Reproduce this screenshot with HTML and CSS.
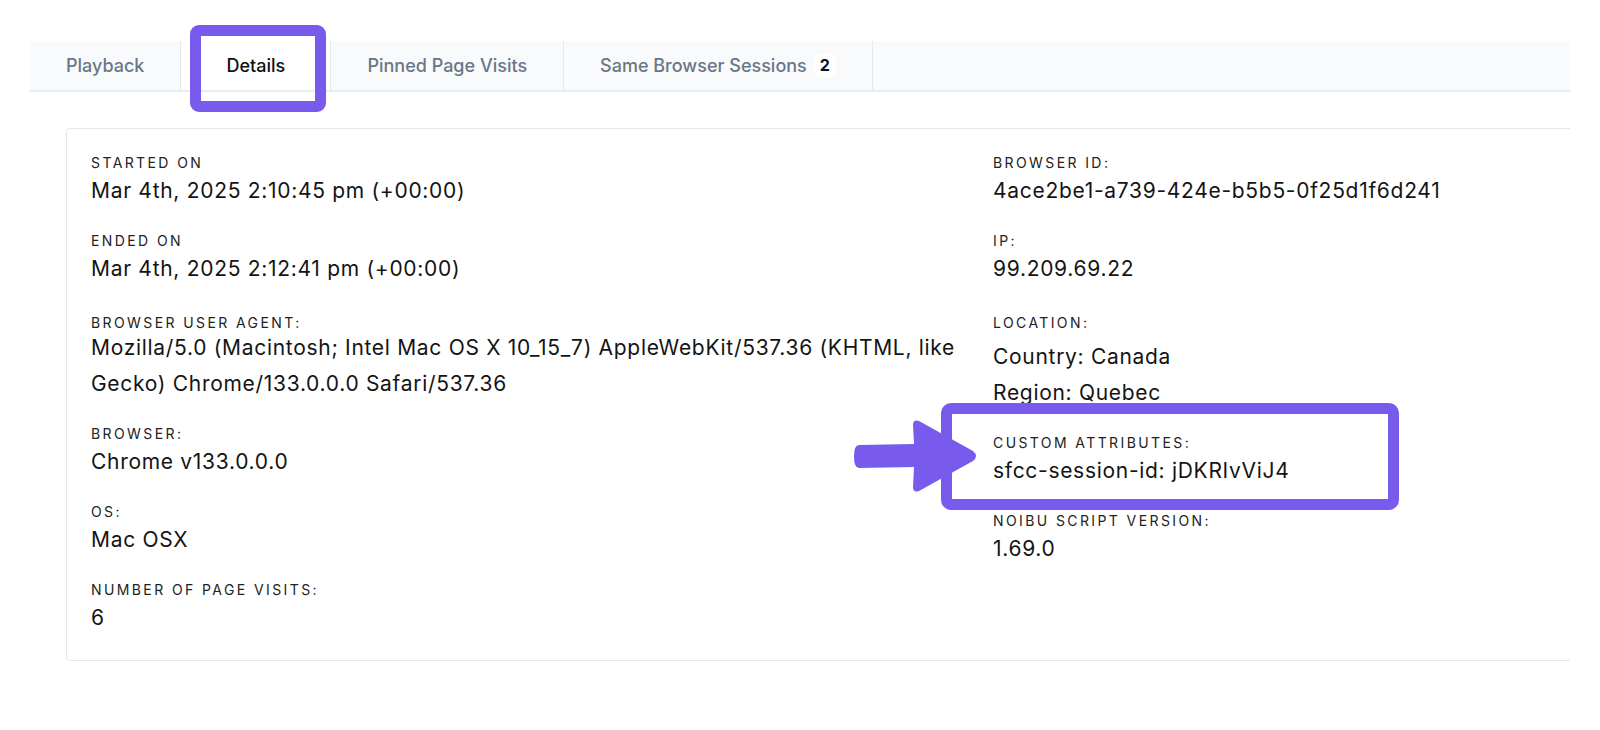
FILE: index.html
```
<!DOCTYPE html>
<html lang="en">
    <head>
        <meta charset="UTF-8" />
        <meta name="viewport" content="width=device-width, initial-scale=1.0" />
        <title>Session Details</title>
        <link rel="stylesheet" href="styles.css">
    </head>
    <body>
        <div class="page">
            <nav class="tabs">
                <div class="tab">Playback</div>
                <div class="tab active">Details</div>
                <div class="tab">Pinned Page Visits</div>
                <div class="tab">Same Browser Sessions <span class="badge">2</span></div>
            </nav>

            <div class="card">
                <div class="col">
                    <div class="field">
                        <div class="label">Started On</div>
                        <div class="value">Mar 4th, 2025 2:10:45 pm (+00:00)</div>
                    </div>
                    <div class="field">
                        <div class="label">Ended On</div>
                        <div class="value">Mar 4th, 2025 2:12:41 pm (+00:00)</div>
                    </div>
                    <div class="field multi">
                        <div class="label">Browser User Agent:</div>
                        <div class="value">Mozilla/5.0 (Macintosh; Intel Mac OS X 10_15_7) AppleWebKit/537.36 (KHTML, like Gecko) Chrome/133.0.0.0 Safari/537.36</div>
                    </div>
                    <div class="field">
                        <div class="label">Browser:</div>
                        <div class="value">Chrome v133.0.0.0</div>
                    </div>
                    <div class="field">
                        <div class="label">OS:</div>
                        <div class="value">Mac OSX</div>
                    </div>
                    <div class="field">
                        <div class="label">Number of Page Visits:</div>
                        <div class="value">6</div>
                    </div>
                </div>

                <div class="col">
                    <div class="field">
                        <div class="label">Browser ID:</div>
                        <div class="value">4ace2be1-a739-424e-b5b5-0f25d1f6d241</div>
                    </div>
                    <div class="field">
                        <div class="label">IP:</div>
                        <div class="value">99.209.69.22</div>
                    </div>
                    <div class="field multi">
                        <div class="label">Location:</div>
                        <div class="value location">
                            <div>Country: Canada</div>
                            <div>Region: Quebec</div>
                        </div>
                    </div>
                    <div class="field">
                        <div class="label">Custom Attributes:</div>
                        <div class="value">sfcc-session-id: jDKRIvViJ4</div>
                    </div>
                    <div class="field">
                        <div class="label">Noibu Script Version:</div>
                        <div class="value">1.69.0</div>
                    </div>
                </div>
            </div>

            <!-- annotations -->
            <div class="mark mark-tab"></div>
            <div class="mark mark-attrs"></div>
            <svg class="arrow" width="128" height="76" viewBox="0 0 128 76">
                <path d="M7 27 L62 26 L61 7 Q61 1 67 3 L121 33 Q127 38 121 43 L67 73 Q61 75 61 69 L62 49 L7 50 Q2 50 2 38.5 Q2 27 7 27 Z" fill="#785bec" />
            </svg>
        </div>
    </body>
</html>
```

FILE: styles.css
```
body {
    margin: 0;
    padding: 0;
    background-color: white;
    font-family: Inter, "Noto Sans", sans-serif;
    color: #1a1a1a;
}
.page {
    position: relative;
    width: 1540px;
    margin-left: 30px;
    padding-top: 41px;
}
.tabs {
    display: flex;
    height: 49px;
    background-color: #f8fafc;
    border-bottom: 2px solid #e8edf3;
}
.tab {
    display: flex;
    align-items: center;
    justify-content: center;
    min-width: 150px;
    padding: 0 36px;
    box-sizing: border-box;
    font-size: 18px;
    font-weight: 500;
    color: #6b7687;
    border-right: 1.5px solid #e3e9f0;
}
.tab.active {
    background-color: white;
    color: #111;
}
.badge {
    display: inline-block;
    margin-left: 7px;
    padding: 2px 6px;
    font-size: 16px;
    font-weight: 700;
    line-height: 19px;
    color: #111;
    background-color: white;
    border-radius: 5px;
}
.card {
    display: grid;
    grid-template-columns: 878px 1fr;
    column-gap: 24px;
    margin: 36px 0 0 36px;
    padding: 24px;
    border: 1.5px solid #e5e9ef;
    border-right: none;
    border-radius: 4px 0 0 4px;
}
.field {
    margin-bottom: 22px;
}
.field:last-child {
    margin-bottom: 0;
}
.field.multi {
    padding-top: 4px;
}
.label {
    font-size: 14px;
    line-height: 20px;
    letter-spacing: 2.4px;
    text-transform: uppercase;
    color: #222;
}
.value {
    font-size: 21px;
    line-height: 36px;
    letter-spacing: 0.7px;
    color: #141414;
}
.field.multi .value {
    margin-top: -3px;
}
.value.location {
    padding-top: 9px;
}
.mark {
    position: absolute;
    box-sizing: border-box;
    border: 11px solid #785bec;
    border-radius: 9px;
}
.mark-tab {
    left: 160px;
    top: 25px;
    width: 136px;
    height: 87px;
}
.mark-attrs {
    left: 911px;
    top: 403px;
    width: 458px;
    height: 107px;
    border-radius: 10px;
}
.arrow {
    position: absolute;
    left: 822px;
    top: 418px;
}
```
